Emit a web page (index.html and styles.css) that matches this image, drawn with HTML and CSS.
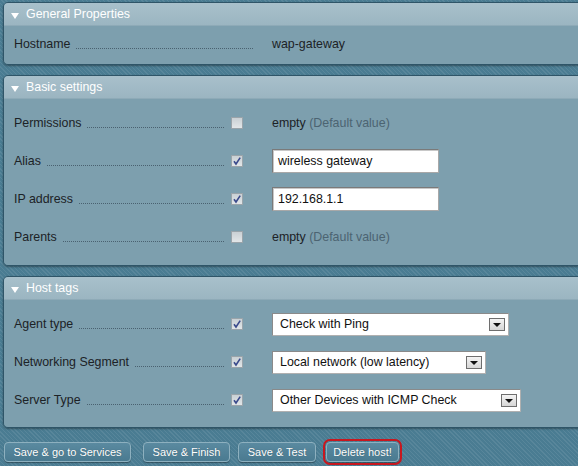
FILE: index.html
```html
<!DOCTYPE html>
<html>
<head>
<meta charset="utf-8">
<link rel="stylesheet" href="styles.css">
</head>
<body>
<div class="page">
  <section class="panel">
    <div class="phead"><span class="tri"></span>General Properties</div>
    <div class="pbody single">
      <div class="row">
        <div class="legend"><span class="lbl">Hostname</span><span class="dots"></span></div>
        <div class="val">wap-gateway</div>
      </div>
    </div>
  </section>

  <section class="panel">
    <div class="phead"><span class="tri"></span>Basic settings</div>
    <div class="pbody basic">
      <div class="row">
        <div class="legend"><span class="lbl">Permissions</span><span class="dots"></span><span class="cb"></span></div>
        <div class="val">empty <span class="def">(Default value)</span></div>
      </div>
      <div class="row">
        <div class="legend"><span class="lbl">Alias</span><span class="dots"></span><span class="cb on"><svg viewBox="0 0 12 12" width="12" height="12"><path d="M3 6.2 L5 9 L9.2 2.6" fill="none" stroke="#3a4a8c" stroke-width="1.6"/></svg></span></div>
        <div class="val"><span class="input">wireless gateway</span></div>
      </div>
      <div class="row">
        <div class="legend"><span class="lbl">IP address</span><span class="dots"></span><span class="cb on"><svg viewBox="0 0 12 12" width="12" height="12"><path d="M3 6.2 L5 9 L9.2 2.6" fill="none" stroke="#3a4a8c" stroke-width="1.6"/></svg></span></div>
        <div class="val"><span class="input">192.168.1.1</span></div>
      </div>
      <div class="row">
        <div class="legend"><span class="lbl">Parents</span><span class="dots"></span><span class="cb"></span></div>
        <div class="val">empty <span class="def">(Default value)</span></div>
      </div>
    </div>
  </section>

  <section class="panel">
    <div class="phead"><span class="tri"></span>Host tags</div>
    <div class="pbody tags">
      <div class="row">
        <div class="legend"><span class="lbl">Agent type</span><span class="dots"></span><span class="cb on"><svg viewBox="0 0 12 12" width="12" height="12"><path d="M3 6.2 L5 9 L9.2 2.6" fill="none" stroke="#3a4a8c" stroke-width="1.6"/></svg></span></div>
        <div class="val"><span class="select s-agent"><span class="opt">Check with Ping</span><span class="arrow"></span></span></div>
      </div>
      <div class="row">
        <div class="legend"><span class="lbl">Networking Segment</span><span class="dots"></span><span class="cb on"><svg viewBox="0 0 12 12" width="12" height="12"><path d="M3 6.2 L5 9 L9.2 2.6" fill="none" stroke="#3a4a8c" stroke-width="1.6"/></svg></span></div>
        <div class="val"><span class="select s-net"><span class="opt">Local network (low latency)</span><span class="arrow"></span></span></div>
      </div>
      <div class="row">
        <div class="legend"><span class="lbl">Server Type</span><span class="dots"></span><span class="cb on"><svg viewBox="0 0 12 12" width="12" height="12"><path d="M3 6.2 L5 9 L9.2 2.6" fill="none" stroke="#3a4a8c" stroke-width="1.6"/></svg></span></div>
        <div class="val"><span class="select s-srv"><span class="opt">Other Devices with ICMP Check</span><span class="arrow"></span></span></div>
      </div>
    </div>
  </section>

  <div class="buttons">
    <button class="btn b1">Save &amp; go to Services</button>
    <button class="btn b2">Save &amp; Finish</button>
    <button class="btn b3">Save &amp; Test</button>
    <button class="btn b4 danger">Delete host!</button>
  </div>
</div>
</body>
</html>
```

FILE: styles.css
```css
html, body {
  margin: 0;
  padding: 0;
  height: 100%;
  overflow: hidden;
}
body {
  background-color: #4a7c92;
  background-image: repeating-linear-gradient(45deg, rgba(255,255,255,0.08) 0 1px, rgba(0,0,0,0) 1px 3px);
  font-family: "Liberation Sans", Arial, sans-serif;
  font-size: 12.4px;
  color: #1c2226;
}
.page {
  padding-top: 2px;
  display: flex;
  flex-direction: column;
}
.panel {
  margin: 0 -12px 10px 3px;
  border: 1px solid #2f5568;
  border-radius: 5px;
  overflow: hidden;
  box-shadow: 0 1px 2px rgba(0,0,0,0.35);
}
.phead {
  height: 23px;
  display: flex;
  align-items: center;
  padding-left: 7px;
  color: #ffffff;
  background: linear-gradient(#a8c0cb, #9bb5c1);
  border-bottom: 1px solid #8eaab7;
  box-sizing: border-box;
}
.tri {
  width: 0;
  height: 0;
  border-left: 4px solid transparent;
  border-right: 4px solid transparent;
  border-top: 6px solid #ffffff;
  margin: 3px 7px 0 0;
}
.pbody {
  background: #7d9fae;
  padding-left: 10px;
  display: flex;
  flex-direction: column;
}
.pbody.single {
  height: 38px;
  box-sizing: border-box;
  padding-top: 1px;
}
.pbody.single .row {
  height: 34px;
}
.pbody.basic {
  padding: 5px 0 9px 10px;
}
.pbody.tags {
  padding: 5px 0 8px 10px;
}
.row {
  height: 38px;
  display: flex;
  align-items: center;
}
.legend {
  width: 241px;
  display: flex;
  align-items: center;
  flex: none;
}
.lbl {
  white-space: nowrap;
}
.dots {
  flex: 1;
  height: 0;
  border-bottom: 1px dotted #4a6170;
  margin: 8px 2px 0 6px;
}
.cb {
  width: 10px;
  height: 10px;
  border: 1px solid #9aa4aa;
  background: linear-gradient(#c9d0d4, #e2e6e8);
  margin-left: 5px;
  margin-right: 12px;
  position: relative;
  flex: none;
}
.cb svg {
  position: absolute;
  left: -1px;
  top: -1px;
}
.val {
  padding-left: 17px;
  white-space: nowrap;
}
.def {
  color: #4c6472;
}
.input {
  display: flex;
  align-items: center;
  width: 167px;
  height: 24px;
  box-sizing: border-box;
  background: #ffffff;
  border: 1px solid #7a7a7a;
  border-right-color: #a8a8a8;
  border-bottom-color: #a8a8a8;
  box-shadow: inset 1px 1px 0 #c8c8c8;
  padding-left: 5px;
  color: #111;
}
.select {
  display: flex;
  align-items: center;
  justify-content: space-between;
  height: 23px;
  box-sizing: border-box;
  background: #ffffff;
  border: 1px solid #8a8a8a;
  border-right-color: #b0b0b0;
  border-bottom-color: #b0b0b0;
  padding: 0 3px 0 7px;
  color: #111;
}
.s-agent { width: 237px; }
.s-net { width: 214px; }
.s-srv { width: 249px; }
.arrow {
  width: 16px;
  height: 13px;
  box-sizing: border-box;
  border: 1px solid #6e6e6e;
  background: linear-gradient(#f4f4f4, #d6d6d6);
  display: flex;
  align-items: center;
  justify-content: center;
}
.arrow::after {
  content: "";
  width: 0;
  height: 0;
  border-left: 4px solid transparent;
  border-right: 4px solid transparent;
  border-top: 4px solid #111;
  margin-top: 2px;
}
.buttons {
  display: flex;
  align-items: center;
  margin-top: 4px;
  padding-left: 4px;
}
.btn {
  height: 20px;
  box-sizing: border-box;
  padding: 0;
  font-family: "Liberation Sans", Arial, sans-serif;
  font-size: 11px;
  color: #ffffff;
  text-shadow: 0 0 1px rgba(0,0,0,0.3);
  background: linear-gradient(#5a8aa0, #4a7a90);
  border: 1px solid #8db0bf;
  border-radius: 4px;
  box-shadow: 0 1px 1px rgba(0,0,0,0.35);
  margin-right: 9px;
}
.b1 { width: 127px; margin-right: 12px; }
.b2 { width: 87px; margin-right: 8px; }
.b3 { width: 78px; margin-right: 10px; }
.b4 { width: 73px; }
.danger {
  outline: 2px solid #c8171e;
  outline-offset: 1px;
}
```
